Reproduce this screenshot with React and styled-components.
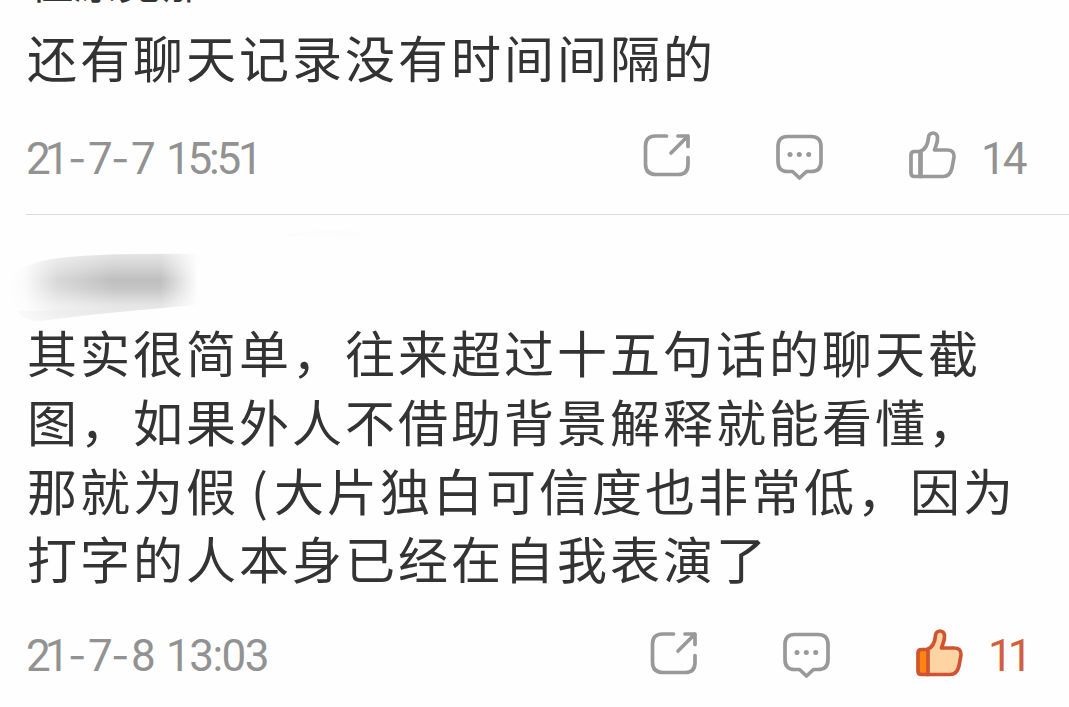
import React from 'react';
import styled, { createGlobalStyle } from 'styled-components';

const Global = createGlobalStyle`
  html, body { margin: 0; background: #fefefe; }
  body { overflow: hidden; }
`;

const Page = styled.main`
  width: 1069px;
  height: 707px;
  overflow: hidden;
  background: #fefefe;
  color: #333;
  font-family: "Noto Sans CJK SC", sans-serif;
`;

const Comment = styled.article`
  display: flex;
  flex-direction: column;
  box-sizing: border-box;
  height: ${(p) => p.$height}px;
  margin-left: 26px;
  border-bottom: ${(p) => (p.$divided ? '1px solid #dcdcdc' : '0')};
`;

const Name = styled.div`
  flex: none;
  height: 62px;
  margin-top: -38px;
  padding-left: 4px;
  font-size: 43px;
  line-height: 36px;
  letter-spacing: 1px;
`;

const Body = styled.div`
  flex: none;
  margin-top: ${(p) => p.$offset}px;
  padding-left: 1px;
  font-size: 50px;
  line-height: 68.8px;
  letter-spacing: 3px;
  white-space: nowrap;
`;

const Line = styled.div`
  height: 68.8px;
`;

const Paren = styled.span`
  display: inline-block;
  width: 35px;
  text-indent: 12px;
  letter-spacing: 0;
`;

const Footer = styled.footer`
  display: flex;
  align-items: center;
  height: 60px;
  margin-top: ${(p) => p.$gap}px;
  color: #929292;
  font-family: Roboto, sans-serif;
  font-size: 44px;
  line-height: 62px;
`;

const Stamp = styled.time`
  display: flex;
  width: ${(p) => p.$width}px;
  white-space: pre;
`;

const Part = styled.span`
  width: ${(p) => p.$w}px;
  letter-spacing: ${(p) => p.$ls || 0}px;
`;

const Dash = styled.span`
  width: 19px;
  font-family: Inter, sans-serif;
  font-size: 40px;
  text-indent: -1px;
`;

const Icon = styled.svg`
  flex: none;
  width: 52px;
  height: 52px;
  margin: 0 ${(p) => p.$gap}px 5px 0;
  fill: none;
  stroke: ${(p) => p.$color || '#999'};
  stroke-width: 3.7;
  stroke-linecap: round;
  stroke-linejoin: round;
`;

const Count = styled.span`
  color: ${(p) => (p.$liked ? '#d2603f' : 'inherit')};
  letter-spacing: ${(p) => (p.$liked ? -5 : -3)}px;
`;

const Author = styled.svg`
  flex: none;
  display: block;
  width: 380px;
  height: 110px;
  margin: 0 0 -10px -26px;
`;

const Share = () => (
  <Icon $gap={80} viewBox="0 0 52 52">
    <path d="M25.500 6H14.500Q4.500 6 4.500 16V34Q4.500 44.500 15 44.500H37Q47 44.500 47 34.500V27.500M37 6H47V16.500M47 6L30 23" />
  </Icon>
);

const Reply = () => (
  <Icon $gap={81} viewBox="0 0 52 52">
    <path d="M14.500 6.500H38Q48 6.500 48 16.500V31.500Q48 41.500 38 41.500H33.500L26.500 48L19.500 41.500H14.500Q5 41.500 5 31.500V16.500Q5 6.500 14.500 6.500Z" />
    <g fill="#999" stroke="none">
      <circle cx="17" cy="24.500" r="2.500" />
      <circle cx="26.300" cy="24.500" r="2.500" />
      <circle cx="35.700" cy="24.500" r="2.500" />
    </g>
  </Icon>
);

const Like = ({ liked }) => (
  <Icon $gap={23} $color={liked ? '#d05432' : undefined} viewBox="0 0 52 52">
    <path
      fill={liked ? '#fed5a2' : 'none'}
      d="M14 21.500C20 19.500 22 14 22.500 7.500C23 1.500 31 1.500 31.500 7.500C32 13 29.500 16 28.500 20H41Q48.500 20 48 27L46 38Q44 46.500 37 46.500H14Z"
    />
    <path fill={liked ? '#fb850f' : 'none'} d="M15 21.500H8.500Q5 21.500 5 25V43Q5 46.500 8.500 46.500H15Z" />
  </Icon>
);

export default function App() {
  return (
    <>
      <Global />
      <Page>
        <Comment $height={215} $divided>
          <Name>但原见那</Name>
          <Body $offset={-2}>
            <Line>还有聊天记录没有时间间隔的</Line>
          </Body>
          <Footer $gap={38}>
            <Stamp $width={615}>
              <Part $w={43} $ls={-6}>21</Part>
              <Dash>-</Dash>
              <Part $w={24}>7</Part>
              <Dash>-</Dash>
              <Part $w={35}>7</Part>
              <Part $w={100} $ls={-3.2}>15:51</Part>
            </Stamp>
            <Share />
            <Reply />
            <Like />
            <Count>14</Count>
          </Footer>
        </Comment>
        <Comment $height={492}>
          <Author viewBox="0 0 380 110" aria-hidden="true">
            <defs>
              <linearGradient id="across">
                <stop offset="0" stopColor="#aaa" stopOpacity="0" />
                <stop offset=".08" stopColor="#aaa" stopOpacity=".05" />
                <stop offset=".25" stopColor="#aaa" stopOpacity=".45" />
                <stop offset=".55" stopColor="#aaa" stopOpacity=".75" />
                <stop offset=".8" stopColor="#aaa" stopOpacity=".75" />
                <stop offset=".93" stopColor="#aaa" stopOpacity=".25" />
                <stop offset="1" stopColor="#aaa" stopOpacity="0" />
              </linearGradient>
              <linearGradient id="down" x2="0" y2="1">
                <stop offset="0" stopColor="#fefefe" stopOpacity=".65" />
                <stop offset=".2" stopColor="#fefefe" stopOpacity=".35" />
                <stop offset=".4" stopColor="#fefefe" stopOpacity="0" />
                <stop offset=".52" stopColor="#fefefe" stopOpacity=".1" />
                <stop offset=".75" stopColor="#fefefe" stopOpacity=".6" />
                <stop offset="1" stopColor="#fefefe" stopOpacity=".75" />
              </linearGradient>
            </defs>
            <path fill="url(#across)" d="M10 70C10 58 28 48 52 44Q90 38 198 39V90Q110 97 40 106Q20 106 16 92Q10 84 10 70Z" />
            <path fill="#999" fillOpacity=".13" d="M18 96Q60 96 110 95Q80 101 40 106Q22 106 18 96Z" />
            <path fill="url(#down)" d="M8 36H202V108H8Z" />
            <path fill="#fcfcfc" d="M280 21Q325 12 360 17V22Z" />
          </Author>
          <Body $offset={2}>
            <Line>其实很简单，往来超过十五句话的聊天截</Line>
            <Line>图，如果外人不借助背景解释就能看懂，</Line>
            <Line>那就为假<Paren>(</Paren>大片独白可信度也非常低，因为</Line>
            <Line>打字的人本身已经在自我表演了</Line>
          </Body>
          <Footer $gap={34}>
            <Stamp $width={622}>
              <Part $w={43} $ls={-6}>21</Part>
              <Dash>-</Dash>
              <Part $w={24}>7</Part>
              <Dash>-</Dash>
              <Part $w={35}>8</Part>
              <Part $w={105} $ls={-1.5}>13:03</Part>
            </Stamp>
            <Share />
            <Reply />
            <Like liked />
            <Count $liked>11</Count>
          </Footer>
        </Comment>
      </Page>
    </>
  );
}
